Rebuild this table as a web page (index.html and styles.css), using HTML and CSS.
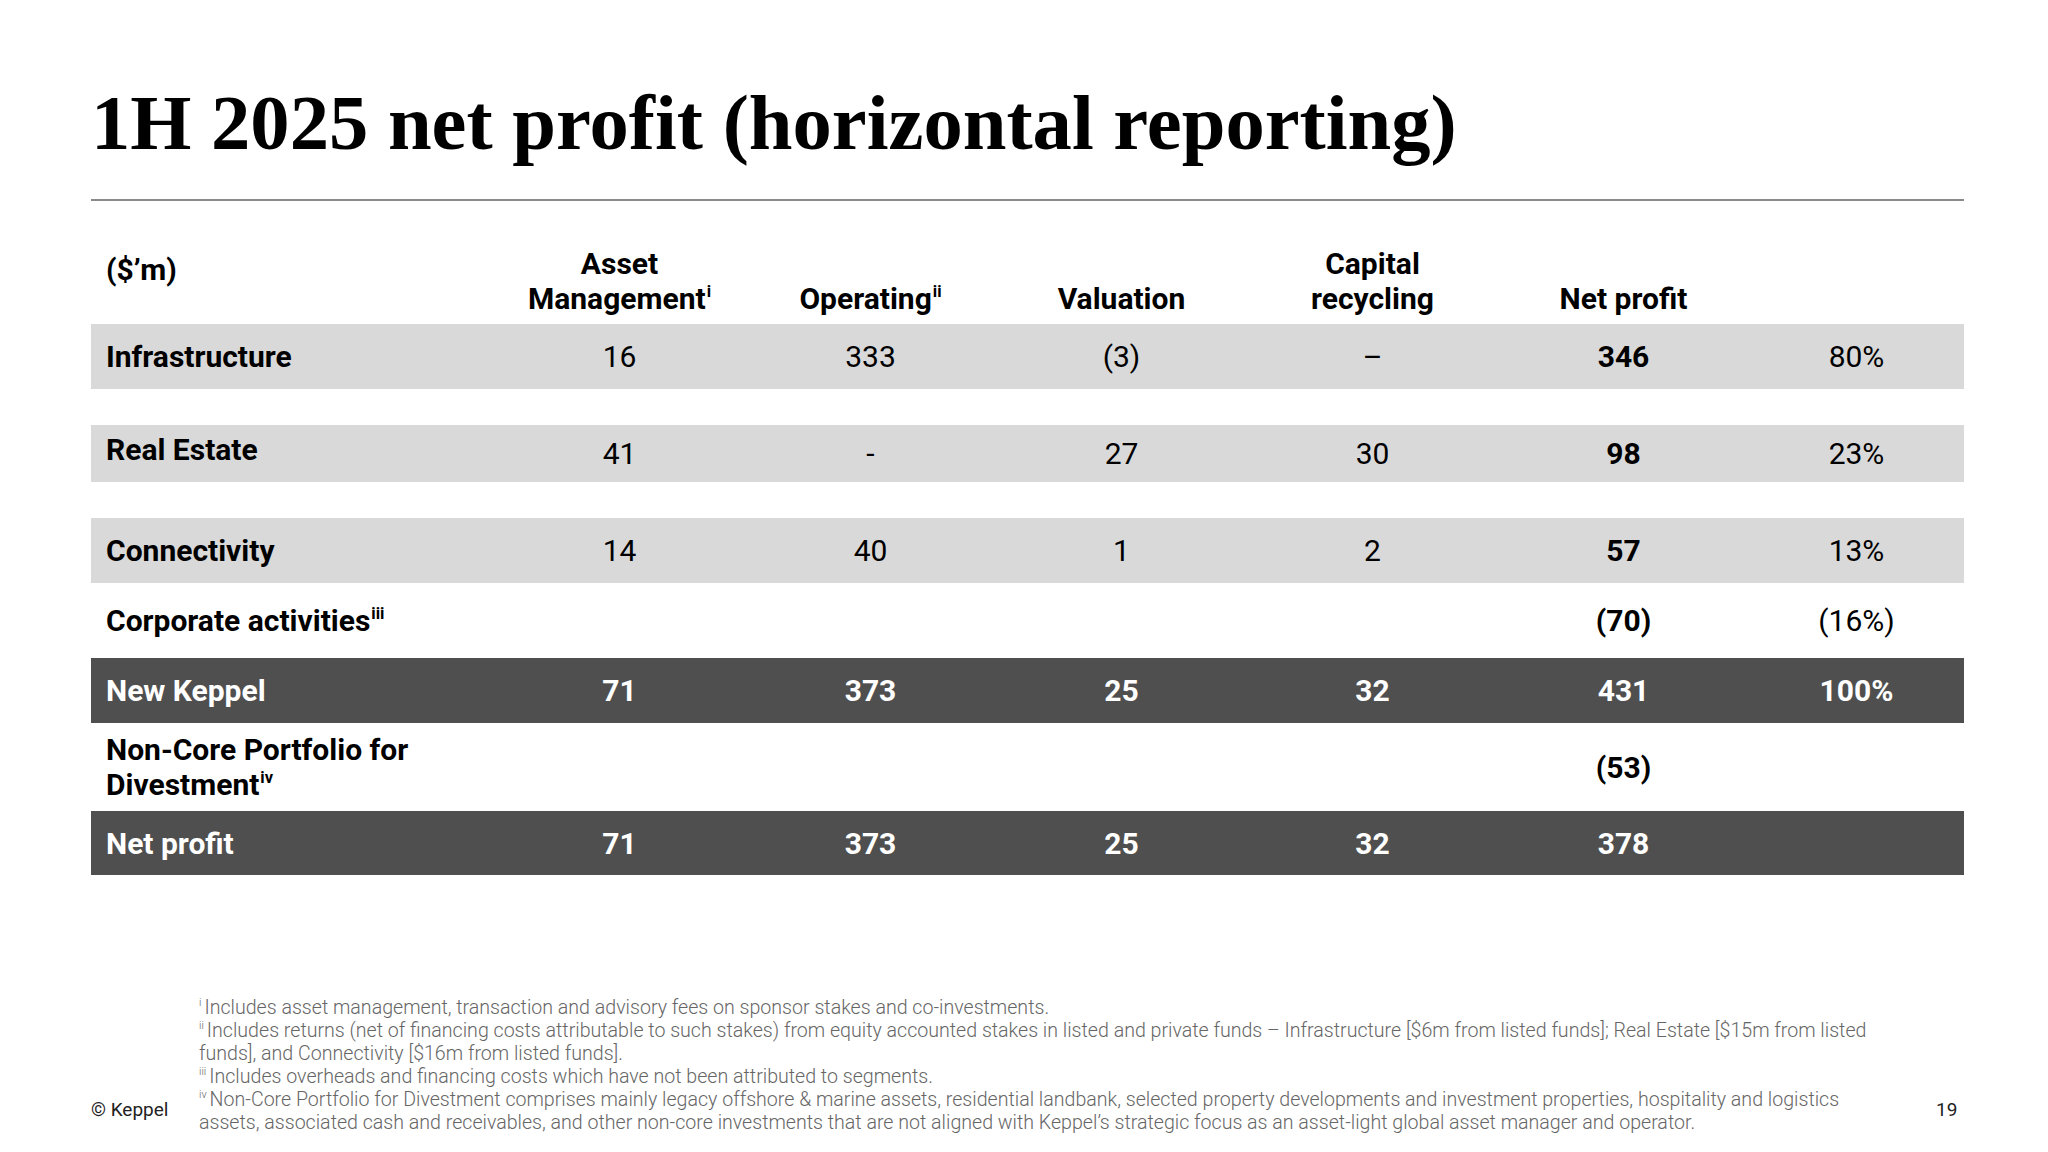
FILE: index.html
```html
<!DOCTYPE html>
<html lang="en">
<head>
<meta charset="utf-8">
<title>1H 2025 net profit (horizontal reporting)</title>
<link rel="stylesheet" href="styles.css">
</head>
<body>
<div class="slide">
  <h1 class="title">1H 2025 net profit (horizontal reporting)</h1>
  <div class="rule"></div>

  <div class="table">
    <div class="row head">
      <div class="cell label unit">($’m)</div>
      <div class="cell">Asset<br>Management<sup class="sup">i</sup></div>
      <div class="cell">Operating<sup class="sup">ii</sup></div>
      <div class="cell">Valuation</div>
      <div class="cell">Capital<br>recycling</div>
      <div class="cell">Net profit</div>
      <div class="cell"></div>
    </div>

    <div class="row shaded r-infra">
      <div class="cell label">Infrastructure</div>
      <div class="cell">16</div>
      <div class="cell">333</div>
      <div class="cell">(3)</div>
      <div class="cell">–</div>
      <div class="cell strong">346</div>
      <div class="cell">80%</div>
    </div>

    <div class="row shaded r-real">
      <div class="cell label raised">Real Estate</div>
      <div class="cell">41</div>
      <div class="cell">-</div>
      <div class="cell">27</div>
      <div class="cell">30</div>
      <div class="cell strong">98</div>
      <div class="cell">23%</div>
    </div>

    <div class="row shaded r-conn">
      <div class="cell label">Connectivity</div>
      <div class="cell">14</div>
      <div class="cell">40</div>
      <div class="cell">1</div>
      <div class="cell">2</div>
      <div class="cell strong">57</div>
      <div class="cell">13%</div>
    </div>

    <div class="row r-corp">
      <div class="cell label">Corporate activities<sup class="sup">iii</sup></div>
      <div class="cell"></div>
      <div class="cell"></div>
      <div class="cell"></div>
      <div class="cell"></div>
      <div class="cell strong">(70)</div>
      <div class="cell">(16%)</div>
    </div>

    <div class="row dark r-nk">
      <div class="cell label">New Keppel</div>
      <div class="cell">71</div>
      <div class="cell">373</div>
      <div class="cell">25</div>
      <div class="cell">32</div>
      <div class="cell">431</div>
      <div class="cell">100%</div>
    </div>

    <div class="row r-noncore">
      <div class="cell label">Non-Core Portfolio for<br>Divestment<sup class="sup">iv</sup></div>
      <div class="cell"></div>
      <div class="cell"></div>
      <div class="cell"></div>
      <div class="cell"></div>
      <div class="cell strong">(53)</div>
      <div class="cell"></div>
    </div>

    <div class="row dark r-net">
      <div class="cell label">Net profit</div>
      <div class="cell">71</div>
      <div class="cell">373</div>
      <div class="cell">25</div>
      <div class="cell">32</div>
      <div class="cell">378</div>
      <div class="cell"></div>
    </div>
  </div>

  <footer class="footer">
    <div class="copyright">© Keppel</div>
    <div class="notes">
      <div class="note"><sup class="fsup">i</sup>Includes asset management, transaction and advisory fees on sponsor stakes and co-investments.</div>
      <div class="note"><sup class="fsup">ii</sup>Includes returns (net of financing costs attributable to such stakes) from equity accounted stakes in listed and private funds – Infrastructure [$6m from listed funds]; Real Estate [$15m from listed</div>
      <div class="note">funds], and Connectivity [$16m from listed funds].</div>
      <div class="note"><sup class="fsup">iii</sup>Includes overheads and financing costs which have not been attributed to segments.</div>
      <div class="note"><sup class="fsup">iv</sup>Non-Core Portfolio for Divestment comprises mainly legacy offshore &amp; marine assets, residential landbank, selected property developments and investment properties, hospitality and logistics</div>
      <div class="note">assets, associated cash and receivables, and other non-core investments that are not aligned with Keppel’s strategic focus as an asset-light global asset manager and operator.</div>
    </div>
    <div class="page-no">19</div>
  </footer>
</div>
</body>
</html>
```

FILE: styles.css
```css
html, body {
  margin: 0;
  padding: 0;
  background: #ffffff;
}

.slide {
  width: 2048px;
  height: 1152px;
  box-sizing: border-box;
  padding: 84px 84px 0 91px;
  display: flex;
  flex-direction: column;
  font-family: Roboto, "Liberation Sans", sans-serif;
  color: #000000;
  overflow: hidden;
}

.title {
  margin: 0;
  font-family: "Liberation Serif", "DejaVu Serif", serif;
  font-weight: 700;
  font-size: 78.6px;
  line-height: 77px;
  height: 77px;
  letter-spacing: 0;
  white-space: nowrap;
  color: #000;
}

.rule {
  margin-top: 38px;
  height: 2px;
  background: #8a8a8a;
}

.table {
  display: flex;
  flex-direction: column;
}

.row {
  display: grid;
  grid-template-columns: 403px repeat(5, 251px) 1fr;
  align-items: center;
  font-size: 30px;
  line-height: 35px;
}

.cell {
  text-align: center;
  white-space: nowrap;
}

.cell.label {
  text-align: left;
  padding-left: 15px;
  font-weight: 700;
}

.strong {
  font-weight: 700;
}

.sup {
  font-size: 0.55em;
  line-height: 0;
  vertical-align: 0.75em;
  margin-left: 1px;
}

.head {
  height: 123px;
  align-items: end;
  font-weight: 700;
  padding-bottom: 8px;
  box-sizing: border-box;
}

.head .unit {
  align-self: start;
  margin-top: 51px;
}

.shaded {
  background: #d9d9d9;
}

.dark {
  background: #4f4f4f;
  color: #ffffff;
  font-weight: 700;
}

.r-infra { height: 65px; }
.r-real { height: 57px; margin-top: 36px; }
.r-conn { height: 65px; margin-top: 36px; }
.r-corp { height: 75px; }
.r-nk { height: 65px; }
.r-noncore { height: 88px; line-height: 35px; }
.r-net { height: 64px; }

.raised {
  padding-bottom: 8px;
}

.footer {
  margin-top: 121px;
  display: flex;
  align-items: flex-end;
}

.copyright {
  width: 108px;
  flex: none;
  font-size: 19px;
  line-height: 23px;
  color: #222;
  margin-bottom: 13px;
}

.notes {
  flex: 1;
  font-size: 19.6px;
  line-height: 23px;
  font-weight: 300;
  color: #666666;
}

.note {
  white-space: nowrap;
}

.fsup {
  font-size: 0.55em;
  line-height: 0;
  vertical-align: 0.7em;
  margin-right: 3px;
}

.page-no {
  flex: none;
  font-size: 19px;
  line-height: 23px;
  color: #222;
  margin-bottom: 13px;
  margin-right: -84px;
  width: 91px;
  text-align: right;
  padding-right: 91px;
  box-sizing: content-box;
}
```
